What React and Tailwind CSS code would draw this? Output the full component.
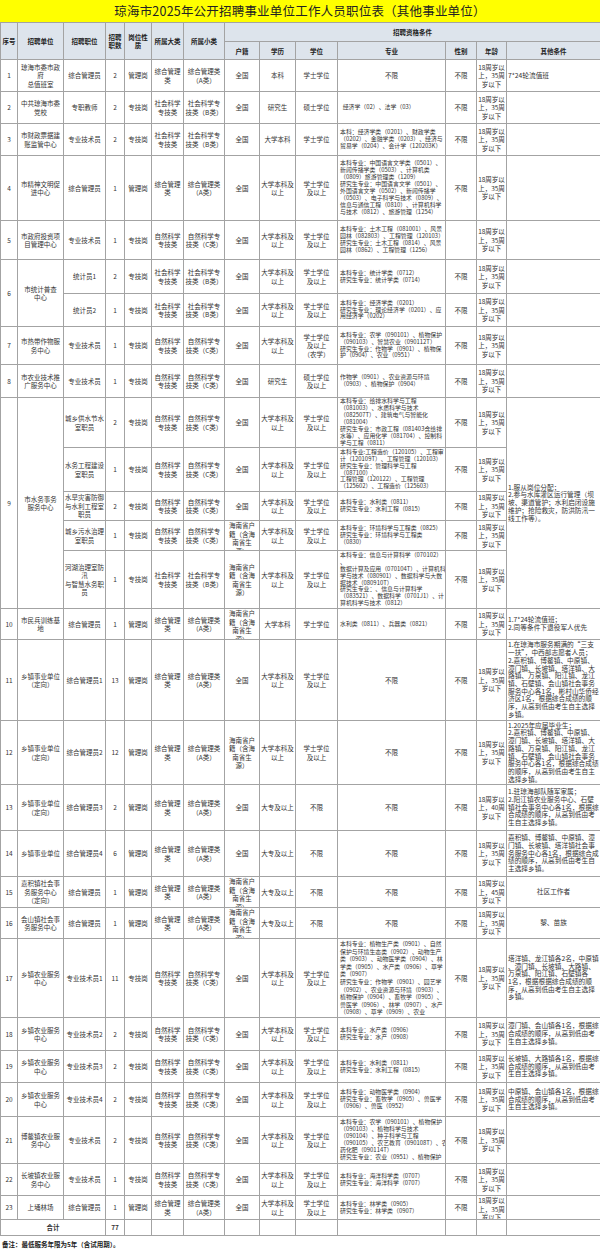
import React from "react";

const ZH = "综合管理\n类";
const ZHA = "综合管理类\n（A类）";
const SK = "社会科学\n专技类";
const SKB = "社会科学专\n技类（B类）";
const ZR = "自然科学\n专技类";
const ZRC = "自然科学专\n技类（C类）";
const HN = "海南省户\n籍（含海\n南省生\n源）";
const BK = "大学本科及\n以上";
const XS = "学士学位\n及以上";
const A35 = "18周岁以\n上，35周\n岁以下";
const A40 = "18周岁以\n上，40周\n岁以下";
const A45 = "18周岁以\n上，45周\n岁以下";
const XZ = "乡镇农业服务\n中心";

const R9_OTHER =
  "1.服从岗位分配；\n2.参与水库灌区运行管理（坝\n坡、渠道管护；水利启闭设施\n维护；抢险救灾，防洪防汛一\n线工作等）。";

const rows = [
  { h: "h-[31px]", c: ["1", "琼海市委市政\n府\n总值班室", "综合管理员", "2", "管理岗", ZH, ZHA, "全国", "本科", "学士学位", "不限", "不限", A35, "7*24轮流值班"] },
  { h: "h-[31px]", c: ["2", "中共琼海市委\n党校", "专职教师", "2", "专技岗", SK, SKB, "全国", "研究生", "硕士学位", "  经济学（02）、法学（03）", "不限", A35, ""] },
  {
    h: "h-[31px]",
    c: ["3", "市财政票据建\n账监管中心", "专业技术员", "2", "专技岗", SK, SKB, "全国", "大学本科", "学士学位",
      "本科：经济学类（0201）、财政学类\n（0202）、金融学类（0203）、经济与\n贸易学（0204）、会计学（120203K）", "不限", A35, ""],
  },
  {
    h: "h-[64px]",
    c: ["4", "市精神文明促\n进中心", "综合管理员", "1", "管理岗", ZH, ZHA, "全国", BK, XS,
      "本科专业：中国语言文学类（0501）、\n新闻传播学类（0503）、计算机类\n（0809）旅游管理类（1209）\n研究生专业：中国语言文学（0501）、\n外国语言文学（0502）、新闻传播学\n（0503）、电子科学与技术（0809）、\n信息与通信工程（0810）、计算机科学\n与技术（0812）、旅游管理（1254）",
      "不限", A35, ""],
  },
  {
    h: "h-[38px]",
    c: ["5", "市政府投资项\n目管理中心", "专业技术员", "1", "专技岗", ZR, ZRC, "全国", BK, XS,
      "本科专业：土木工程（081001）、风景\n园林（082803）、工程管理（120103）\n研究生专业：土木工程（0814）、风景\n园林（0862）、工程管理（1256）",
      "", A35, ""],
  },
  {
    h: "h-[33px]",
    c: [{ t: "6", rs: 2, h: "h-[66px]" }, { t: "市统计普查\n中心", rs: 2, h: "h-[66px]" }, "统计员1", "2", "专技岗", SK, SKB, "全国", BK, XS,
      "本科专业：统计学类（0712）\n研究生专业：统计学类（0714）", "不限", A35, ""],
  },
  {
    h: "h-[32px]",
    c: [null, null, "统计员2", "1", "专技岗", SK, SKB, "全国", BK, XS,
      "本科专业：经济学类（0201）\n研究生专业：理论经济学（0201）、应\n用经济学（0202）", "不限", A35, ""],
  },
  {
    h: "h-[37px]",
    c: ["7", "市热带作物服\n务中心", "专业技术员", "1", "专技岗", ZR, ZRC, "全国", BK, "学士学位\n及以上\n（农学）",
      "本科专业：农学（090101）、植物保护\n（090103）、智慧农业（090112T）\n研究生专业：作物学（0901）、植物保\n护（0904）、农业（0951）", "不限", A35, ""],
  },
  {
    h: "h-[32px]",
    c: ["8", "市农业技术推\n广服务中心", "专业技术员", "1", "专技岗", ZR, ZRC, "全国", "研究生", "硕士学位\n及以上",
      "作物学（0901）、农业资源与环境\n（0903）、植物保护（0904）", "不限", A35, ""],
  },
  {
    h: "h-[49px]",
    c: [{ t: "9", rs: 5, h: "h-[210px]" }, { t: "市水务事务\n服务中心", rs: 5, h: "h-[210px]" }, "城乡供水节水\n室职员", "2", "专技岗", ZR, ZRC, "全国", BK, XS,
      "本科专业：给排水科学与工程\n（081003）、水质科学与技术\n（082507T）、建筑电气与智能化\n（081004）\n研究生专业：市政工程（081403含给排\n水等）、应用化学（081704）、控制科\n学与工程（0811）",
      "不限", A35, { t: R9_OTHER, rs: 5, h: "h-[210px]" }],
  },
  {
    h: "h-[43px]",
    c: [null, null, "水务工程建设\n室职员", "1", "专技岗", ZR, ZRC, "全国", BK, XS,
      "本科专业:工程造价（120105）、工程审\n计（120109T）、工程管理（120103）\n研究生专业：管理科学与工程\n（087100）、\n工程管理（120122）、工程管理\n（125602）、工程造价（125603）",
      "不限", A35, null],
  },
  {
    h: "h-[28px]",
    c: [null, null, "水旱灾害防御\n与水利工程室\n职员", "2", "专技岗", ZR, ZRC, "全国", BK, XS,
      "本科专业：水利类（0811）\n研究生专业：水利工程（0815）", "不限", A35, null],
  },
  {
    h: "h-[29px]",
    c: [null, null, "城乡污水治理\n室职员", "1", "专技岗", ZR, ZRC, HN, BK, XS,
      "本科专业：环境科学与工程类（0825）\n研究生专业：环境科学与工程类\n（0830）", "不限", A35, null],
  },
  {
    h: "h-[57px]",
    c: [null, null, "河湖治理室防\n汛\n与智慧水务职\n员", "1", "专技岗", SK, SKB, HN, BK, XS,
      "本科专业：信息与计算科学（070102）\n、\n数据计算及应用（070104T）、计算机科\n学与技术（080901）、数据科学与大数\n据技术（080910T）\n研究生专业：、信息与计算科学\n（083521）、数据科学（0701J1）、计\n算机科学与技术（0812）",
      "不限", A35, null],
  },
  {
    h: "h-[30px]",
    c: ["10", "市民兵训练基\n地", "综合管理员", "1", "管理岗", ZH, ZHA, HN, "大学本科", "学士学位",
      "水利类（0811）、兵器类（0821）", "不限", A35, "1.7*24轮流值班；\n2.同等条件下退役军人优先"],
  },
  {
    h: "h-[80px]",
    c: ["11", "乡镇事业单位\n（定向）", "综合管理员1", "13", "管理岗", ZH, ZHA, "全国", BK, XS, "不限", "不限", A35,
      "1.在琼海市服务期满的“三支\n一扶”，中西部志愿者人员；\n2.嘉积镇、博鳌镇、中原镇、\n潭门镇、长坡镇、塔洋镇、大\n路镇、万泉镇、阳江镇、龙江\n镇、石壁镇、会山镇社会事务\n服务中心各1名，彬村山华侨经\n济区1名，根据综合成绩的顺\n序，从高到低由考生自主选择\n乡镇。"],
  },
  {
    h: "h-[63px]",
    c: ["12", "乡镇事业单位\n（定向）", "综合管理员2", "12", "管理岗", ZH, ZHA, HN, BK, XS, "不限", "不限", A35,
      "1.2025年应届毕业生；\n2.嘉积镇、博鳌镇、中原镇、\n潭门镇、长坡镇、塔洋镇、大\n路镇、万泉镇、阳江镇、龙江\n镇、石壁镇、会山镇社会事务\n服务中心各1名，根据综合成绩\n的顺序，从高到低由考生自主\n选择乡镇。"],
  },
  {
    h: "h-[45px]",
    c: ["13", "乡镇事业单位\n（定向）", "综合管理员3", "2", "管理岗", ZH, ZHA, "全国", "大专及以上", "不限", "不限", "不限", A40,
      "1.驻琼海部队随军家属；\n2.阳江镇农业服务中心、石壁\n镇社会事务中心各1名，根据综\n合成绩的顺序，从高到低由考\n生自主选择乡镇。"],
  },
  {
    h: "h-[45px]",
    c: ["14", "乡镇事业单位", "综合管理员4", "6", "管理岗", ZH, ZHA, "全国", "大专及以上", "不限", "不限", "不限", A35,
      "嘉积镇、博鳌镇、中原镇、潭\n门镇、长坡镇、塔洋镇社会事\n务服务中心各1名，根据综合成\n绩的顺序，从高到低由考生自\n主选择乡镇。"],
  },
  {
    h: "h-[30px]",
    c: ["15", "嘉积镇社会事\n务服务中心\n（定向）", "综合管理员", "1", "管理岗", ZH, ZHA, HN, "大专及以上", "不限", "不限", "不限", A45,
      { t: "社区工作者", center: true }],
  },
  {
    h: "h-[30px]",
    c: ["16", "会山镇社会事\n务服务中心", "综合管理员", "1", "管理岗", ZH, ZHA, HN, "大专及以上", "不限", "不限", "不限", A35,
      { t: "黎、苗族", center: true }],
  },
  {
    h: "h-[78px]",
    lead: true,
    c: ["17", XZ, "专业技术员1", "11", "专技岗", ZR, ZRC, "全国", BK, XS,
      "本科专业：植物生产类（0901）、自然\n保护与环境生态类（0902）、动物生产\n类（0903）、动物医学类（0904）、林\n学类（0905）、水产类（0906）、草学\n类（0907）\n研究生专业：作物学（0901）、园艺学\n（0902）、农业资源与环境（0903）、\n植物保护（0904）、畜牧学（0905）、\n兽医学（0906）、林学（0907）、水产\n（0908）、草学（0909）、农业",
      "不限", A35,
      "塔洋镇、龙江镇各2名，中原镇\n、潭门镇、长坡镇、大路镇、\n万泉镇、阳江镇、石壁镇各\n1名，根据根据综合成绩的顺\n序，从高到低由考生自主选择\n乡镇。"],
  },
  {
    h: "h-[32px]",
    c: ["18", XZ, "专业技术员2", "2", "专技岗", ZR, ZRC, "全国", BK, XS,
      "本科专业：水产类（0906）\n研究生专业：水产（0908）", "不限", A35,
      "潭门镇、会山镇各1名，根据综\n合成绩的顺序，从高到低由考\n生自主选择乡镇。"],
  },
  {
    h: "h-[31px]",
    c: ["19", XZ, "专业技术员3", "2", "专技岗", ZR, ZRC, "全国", BK, XS,
      "本科专业：水利类（0811）\n研究生专业：水利工程（0815）", "不限", A35,
      "长坡镇、大路镇各1名，根据综\n合成绩的顺序，从高到低由考\n生自主选择乡镇。"],
  },
  {
    h: "h-[33px]",
    c: ["20", XZ, "专业技术员4", "2", "专技岗", ZR, ZRC, "全国", BK, XS,
      "本科专业：动物医学类（0904）\n研究生专业：畜牧学（0905）、兽医学\n（0906）、兽医（0952）", "不限", A35,
      "中原镇、会山镇各1名，根据综\n合成绩的顺序，从高到低由考\n生自主选择乡镇。"],
  },
  {
    h: "h-[46px]",
    c: ["21", "博鳌镇农业服\n务中心", "专业技术员", "2", "专技岗", ZR, ZRC, "全国", BK, XS,
      "本科专业：农学（090101）、植物保护\n（090103）、植物科学与技术\n（090104）、种子科学与工程\n（090105）、农艺教育（090108T）、农\n药化肥（090114T）\n研究生专业：农业（0951）、植物保护",
      "不限", A35, ""],
  },
  {
    h: "h-[31px]",
    c: ["22", "长坡镇农业服\n务中心", "专业技术员", "1", "专技岗", ZR, ZRC, "全国", BK, XS,
      "本科专业：海洋科学类（0707）\n研究生专业：海洋科学（0707）", "不限", A35, ""],
  },
  {
    h: "h-[23px]",
    c: ["23", "上埇林场", "综合管理员", "1", "管理岗", ZH, ZHA, "全国", BK, XS,
      "本科专业：林学类（0905）\n研究生专业：林学类（0907）", "不限", A35, ""],
  },
];

const border = "border border-[#a3a3a3] p-0 align-middle";

function Cell({ col, t, h, rs, center, lead }) {
  let text = "px-[1px] text-center text-[6.5px] leading-[8.5px]";
  if (col === 10 && t !== "不限") {
    text = lead
      ? "px-[2px] text-left text-[5.9px] leading-[7.6px]"
      : "px-[2px] text-left text-[5.9px] leading-[6.9px]";
  }
  if (col === 13) {
    text = center
      ? "px-[1px] text-center text-[6.7px] leading-[7.7px]"
      : "px-[1px] text-left text-[6.7px] leading-[7.7px]";
  }
  return (
    <td rowSpan={rs} className={border}>
      <div className={`flex flex-col overflow-hidden ${h} ${text}`}>
        <div className="my-auto whitespace-pre">{t}</div>
      </div>
    </td>
  );
}

function Row({ row }) {
  return (
    <tr>
      {row.c.map((v, i) => {
        if (v === null) return null;
        const o = typeof v === "string" ? { t: v } : v;
        return <Cell key={i} col={i} t={o.t} h={o.h || row.h} rs={o.rs} center={o.center} lead={row.lead} />;
      })}
    </tr>
  );
}

function Head({ children, rs, cs, h }) {
  return (
    <td rowSpan={rs} colSpan={cs} className={`${border} bg-[#dde4ec]`}>
      <div className={`flex flex-col overflow-hidden ${h} px-[1px] text-center text-[6.5px] leading-[8px] font-bold text-[#222]`}>
        <div className="my-auto whitespace-pre">{children}</div>
      </div>
    </td>
  );
}

export default function App() {
  return (
    <div className="w-[600px] h-[1251px] bg-white font-['Noto_Sans_CJK_SC',sans-serif] text-[#333]">
      <div className="h-[22px] bg-[#ffff00] flex items-center justify-center text-[12.5px] text-[#222] tracking-[0.2px]">
        琼海市2025年公开招聘事业单位工作人员职位表（其他事业单位）
      </div>
      <table className="w-[600px] table-fixed border-collapse">
        <colgroup>
          <col className="w-[17px]" />
          <col className="w-[46px]" />
          <col className="w-[42px]" />
          <col className="w-[19px]" />
          <col className="w-[27px]" />
          <col className="w-[32px]" />
          <col className="w-[41px]" />
          <col className="w-[35px]" />
          <col className="w-[36px]" />
          <col className="w-[42px]" />
          <col className="w-[108px]" />
          <col className="w-[31px]" />
          <col className="w-[30px]" />
          <col className="w-[94px]" />
        </colgroup>
        <tbody>
          <tr>
            <Head rs={2} h="h-[36px]">序号</Head>
            <Head rs={2} h="h-[36px]">招聘单位</Head>
            <Head rs={2} h="h-[36px]">招聘职位</Head>
            <Head rs={2} h="h-[36px]">{"招聘\n职数"}</Head>
            <Head rs={2} h="h-[36px]">{"岗位性\n质"}</Head>
            <Head rs={2} h="h-[36px]">所属大类</Head>
            <Head rs={2} h="h-[36px]">所属小类</Head>
            <Head cs={7} h="h-[18px]">招聘资格条件</Head>
          </tr>
          <tr>
            <Head h="h-[17px]">户籍</Head>
            <Head h="h-[17px]">学历</Head>
            <Head h="h-[17px]">学位</Head>
            <Head h="h-[17px]">专业</Head>
            <Head h="h-[17px]">性别</Head>
            <Head h="h-[17px]">年龄</Head>
            <Head h="h-[17px]">其他条件</Head>
          </tr>
          {rows.map((row, i) => (
            <Row key={i} row={row} />
          ))}
          <tr>
            <td colSpan={3} className={border}>
              <div className="h-[15px] flex items-center justify-center text-[6.5px] font-bold">合计</div>
            </td>
            <td className={border}>
              <div className="h-[15px] flex items-center justify-center text-[6.5px] font-bold">77</div>
            </td>
            <td className={border}></td>
            <td className={border}></td>
            <td className={border}></td>
            <td className={border}></td>
            <td className={border}></td>
            <td className={border}></td>
            <td className={border}></td>
            <td className={border}></td>
            <td className={border}></td>
            <td className={border}></td>
          </tr>
        </tbody>
      </table>
      <div className="pl-[2px] pt-[4px] text-[6.5px] leading-[8px] font-bold text-[#222]">
        备注：最低服务年限为5年（含试用期）。
      </div>
    </div>
  );
}
